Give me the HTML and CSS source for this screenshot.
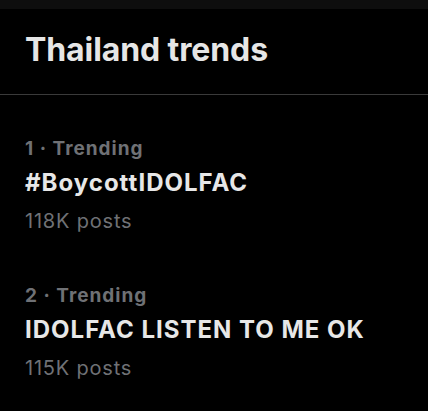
FILE: index.html
```html
<!DOCTYPE html>
<html>
<head>
<meta charset="utf-8">
<link rel="stylesheet" href="styles.css">
</head>
<body>
<div class="topbar"></div>
<header class="header">
  <h1 class="title">Thailand trends</h1>
</header>
<main class="list">
  <section class="trend">
    <div class="meta">1 · Trending</div>
    <div class="name">#BoycottIDOLFAC</div>
    <div class="count">118K posts</div>
  </section>
  <section class="trend">
    <div class="meta">2 · Trending</div>
    <div class="name">IDOLFAC LISTEN TO ME OK</div>
    <div class="count">115K posts</div>
  </section>
</main>
</body>
</html>
```
FILE: styles.css
```css
html, body {
  margin: 0;
  padding: 0;
  background: #000;
}
body {
  font-family: Inter, "Noto Sans", sans-serif;
  width: 428px;
  height: 411px;
  overflow: hidden;
}
.topbar {
  height: 9px;
  background: #0e0e0e;
}
.header {
  padding: 0 25px;
  height: 85px;
  border-bottom: 1px solid #3a3a3a;
  display: flex;
  align-items: flex-start;
}
.title {
  margin: 0;
  padding-top: 23px;
  font-size: 32px;
  line-height: 36px;
  font-weight: 700;
  color: #e6e6e6;
  letter-spacing: -0.1px;
}
.list {
  padding: 42px 25px 0;
  display: flex;
  flex-direction: column;
  gap: 51px;
}
.trend {
  display: flex;
  flex-direction: column;
}
.meta {
  font-size: 19px;
  line-height: 24px;
  font-weight: 700;
  color: #6f7175;
  letter-spacing: 1px;
}
.name {
  margin-top: 8px;
  font-size: 24px;
  line-height: 28px;
  font-weight: 700;
  color: #e7e7e7;
  letter-spacing: 1px;
}
.count {
  margin-top: 12px;
  font-size: 20px;
  line-height: 24px;
  font-weight: 400;
  color: #6f7175;
  letter-spacing: 0.8px;
}
```
